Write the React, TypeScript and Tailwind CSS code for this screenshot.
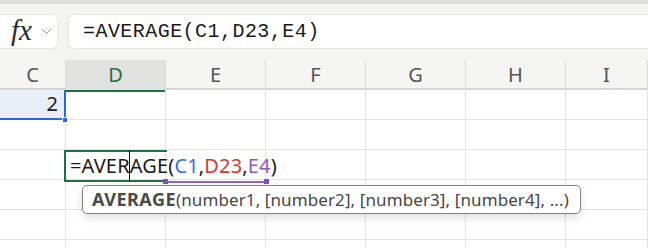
import { ChevronDown } from 'lucide-react';

const cols = ['C', 'D', 'E', 'F', 'G', 'H', 'I'];

const ui = { fontFamily: '"Noto Sans", "Open Sans", Arial, sans-serif' };

function Cell({ col, row }: { col: number; row: number }) {
  // C1 holds the value 2 and is the selected range
  if (col === 0 && row === 0) {
    return (
      <div className="h-[30px] bg-[#e9eef8] border-r-2 border-b-2 border-[#2f68d0] flex items-center justify-end pr-[6px] text-[20px] text-[#222]">
        2
      </div>
    );
  }
  return <div className="h-[30px] border-r border-b border-[#e3e3e3]" />;
}

export default function App() {
  return (
    <div className="relative w-[648px] h-[248px] overflow-hidden bg-white" style={ui}>
      {/* formula bar */}
      <div className="h-[60px] bg-[#f3f3f1] border-t-[4px] border-[#deded9] flex items-start gap-[10px] pt-[10px]">
        <div className="w-[58px] h-[35px] bg-white rounded-r-[6px] border border-l-0 border-[#e6e6e3] flex items-center pl-[11px] gap-[6px]">
          <span className="text-[29px] italic font-medium text-[#2a2a2a] leading-none -mt-[3px]" style={{ fontFamily: '"Liberation Serif", "DejaVu Serif", serif' }}>
            fx
          </span>
          <ChevronDown className="w-[17px] h-[17px] text-[#8a8a8a]" strokeWidth={1.3} />
        </div>
        <div className="flex-1 h-[35px] bg-white rounded-l-[6px] border border-r-0 border-[#e6e6e3] flex items-center pl-[14px]">
          <span className="text-[20px] tracking-[0.45px] text-[#1a1a1a]" style={{ fontFamily: '"Liberation Mono", "DejaVu Sans Mono", monospace' }}>
            =AVERAGE(C1,D23,E4)
          </span>
        </div>
      </div>

      {/* column headers */}
      <div className="grid grid-cols-[66px_100px_100px_100px_100px_100px_1fr] h-[30px] bg-[#f5f5f3] border-b-2 border-[#d4d4d4]">
        {cols.map((c, i) => (
          <div
            key={c}
            className={
              i === 1
                ? 'flex items-center justify-center bg-[#e1e1df] border-b-2 border-[#1e7145] -mb-[2px] border-r border-r-[#d8d8d8] text-[20px] text-[#1e7145]'
                : 'flex items-center justify-center border-r border-[#dcdcdc] text-[20px] text-[#555]'
            }
          >
            {c}
          </div>
        ))}
      </div>

      {/* rows */}
      <div className="grid grid-cols-[66px_100px_100px_100px_100px_100px_1fr]">
        {Array.from({ length: 6 }).flatMap((_, r) =>
          cols.map((c, ci) => <Cell key={c + r} col={ci} row={r} />)
        )}
      </div>

      {/* fill handle of C1 */}
      <div className="absolute left-[62px] top-[117px] w-[6px] h-[6px] bg-[#2f68d0] border border-white" />

      {/* cell in edit mode */}
      <div className="absolute left-[64px] top-[150px] w-[103px] h-[32px] border-l-2 border-t-2 border-b-2 border-[#1e7145]" />
      <div className="absolute left-[70px] top-[150px] h-[32px] flex items-center text-[20px] tracking-[0.15px] text-[#1a1a1a] whitespace-nowrap">
        <span>=AVER</span>
        <span className="w-[1.5px] h-[32px] bg-[#111] -mx-[0.75px]" />
        <span>AGE(</span>
        <span className="text-[#3c6fd1]">C1</span>
        <span>,</span>
        <span className="text-[#cf3a34]">D23</span>
        <span>,</span>
        <span className="text-[#8a5cc6]">E4</span>
        <span>)</span>
      </div>

      {/* argument range underline */}
      <div className="absolute left-[166px] top-[181px] w-[100px] h-[1.5px] bg-[#8f63c9]" />
      <div className="absolute left-[163px] top-[179px] w-[5px] h-[5px] bg-[#7b52b8]" />
      <div className="absolute left-[264px] top-[179px] w-[5px] h-[5px] bg-[#7b52b8]" />

      {/* function tooltip */}
      <div className="absolute left-[82px] top-[185px] w-[499px] h-[29px] bg-white border border-[#808080] rounded-[5px] shadow-[0_4px_10px_rgba(0,0,0,0.12)] flex items-center pl-[9px] text-[17px] text-[#474747] whitespace-nowrap">
        <span className="font-bold text-[18px] tracking-[0.5px] text-[#4a4a4a]">AVERAGE</span>
        <span className="tracking-[0.1px]">(number1, [number2], [number3], [number4], ...)</span>
      </div>
    </div>
  );
}
